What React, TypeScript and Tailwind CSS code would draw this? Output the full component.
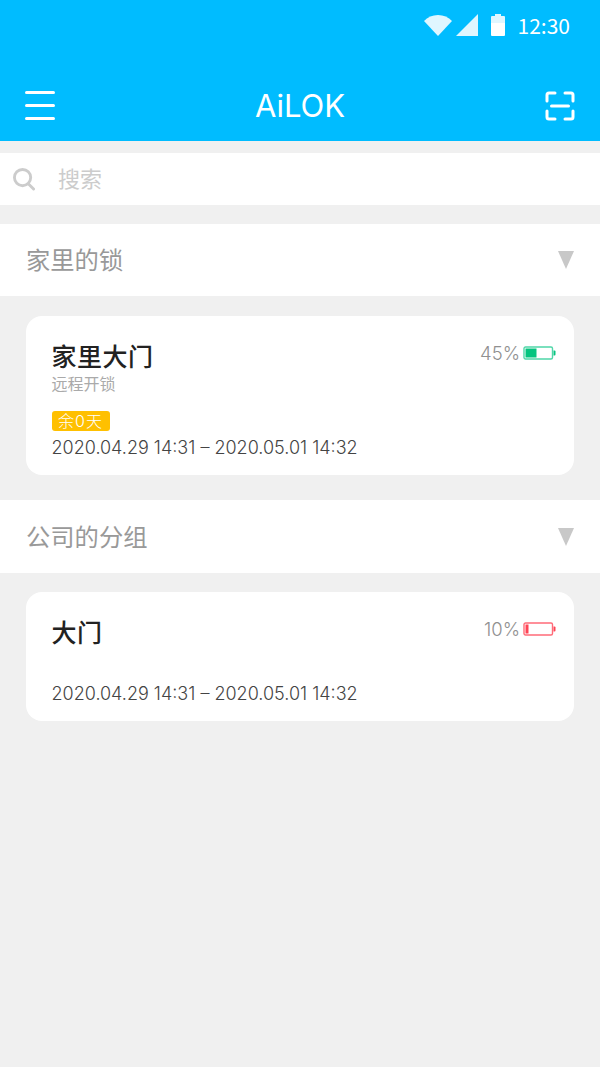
const font = "font-['Inter','Noto_Sans_CJK_SC',sans-serif]";

function Battery({ level, color, fill }: { level: number; color: string; fill: string }) {
  return (
    <svg width="33" height="14" viewBox="0 0 33 14" fill="none">
      <rect x="1" y="1" width="28.5" height="12" rx="1.5" stroke={color} strokeWidth="1.4" />
      <path d="M30.500 4.500h1a1 1 0 0 1 1 1v3a1 1 0 0 1-1 1h-1z" fill={fill} />
      <rect x="2.500" y="2.500" width={level} height="9" fill={fill} />
    </svg>
  );
}

function SectionHeader({ title, className }: { title: string; className: string }) {
  return (
    <div className={`flex items-center justify-between bg-white pl-[26px] pr-[26px] ${className}`}>
      <span className="pt-[1px] text-[24.300px] text-[#999999]">{title}</span>
      <svg width="16" height="18" viewBox="0 0 16 18">
        <path d="M0 0h16L8 18z" fill="#c8c8c8" />
      </svg>
    </div>
  );
}

function Range() {
  return (
    <p className="text-[18px] leading-[24px] font-light text-[#444444]">2020.04.29 14:31 – 2020.05.01 14:32</p>
  );
}

export default function App() {
  return (
    <main className={`flex h-[1067px] w-[600px] flex-col bg-[#f0f0f0] ${font}`}>
      <header className="h-[141px] bg-[#00bcff] text-white">
        <div className="flex h-[50px] items-center justify-end pr-[30px]">
          <svg width="28" height="22" viewBox="0 0 28 22" className="mr-[4px]">
            <path d="M0 7C3.500 3 8.500 1 14 1s10.500 2 14 6L14 22z" fill="#e0f6ff" />
          </svg>
          <svg width="22" height="22" viewBox="0 0 22 22" className="mr-[13px]">
            <path d="M22 0v22H0z" fill="#e0f6ff" />
          </svg>
          <svg width="14" height="22" viewBox="0 0 14 22" className="mr-[13px]">
            <path d="M4 0h6v2h3a1 1 0 0 1 1 1v6H0V3a1 1 0 0 1 1-1h3z" fill="#e0f6ff" />
            <path d="M0 9h14v12a1 1 0 0 1-1 1H1a1 1 0 0 1-1-1z" fill="#ffffff" />
          </svg>
          <span className="font-['Noto_Sans_CJK_SC',sans-serif] text-[21px] leading-[24px]">12:30</span>
        </div>
        <div className="flex h-[91px] items-center justify-between px-[25px] pt-[20px]">
          <div className="flex w-[30px] flex-col gap-[10px]">
            <span className="h-[3px] rounded-full bg-white" />
            <span className="h-[3px] rounded-full bg-white" />
            <span className="h-[3px] rounded-full bg-white" />
          </div>
          <h1 className="pt-[2px] text-[31px] font-normal">AiLOK</h1>
          <svg width="30" height="30" viewBox="0 0 30 30" fill="none" stroke="#fff" strokeWidth="3" strokeLinecap="round" strokeLinejoin="round">
            <path d="M10 2H4a2 2 0 0 0-2 2v6M20 2h6a2 2 0 0 1 2 2v6M10 28H4a2 2 0 0 1-2-2v-6M20 28h6a2 2 0 0 0 2-2v-6M6.500 15h17" />
          </svg>
        </div>
      </header>

      <div className="mt-[12px] flex h-[52px] items-center bg-white pl-[13px]">
        <svg width="22" height="23" viewBox="0 0 23 24" fill="none" stroke="#cccccc" strokeWidth="3" strokeLinecap="round">
          <circle cx="10" cy="10" r="8.500" />
          <path d="M16.500 17l5 5" />
        </svg>
        <span className="ml-[23px] text-[22px] text-[#cccccc]">搜索</span>
      </div>

      <SectionHeader title="家里的锁" className="mt-[19px] h-[72px]" />

      <section className="mx-[26px] mt-[20px] h-[159px] rounded-[16px] bg-white pl-[25.500px] pr-[18px] pt-[24px]">
        <div className="flex items-start justify-between">
          <h2 className="text-[25px] leading-[34px] font-medium tracking-[0.5px] text-[#222222]">家里大门</h2>
          <div className="flex items-center gap-[3px] pt-[1px]">
            <span className="text-[18.500px] leading-[24px] font-light text-[#909090]">45%</span>
            <Battery level={11} color="#4fd6a8" fill="#06c47f" />
          </div>
        </div>
        <p className="text-[16px] leading-[20px] text-[#aaaaaa]">远程开锁</p>
        <span className="mt-[17px] flex h-[20px] w-[58px] items-center justify-center rounded-[3px] bg-[#ffc000] text-[16px] font-light tracking-[1px] text-white">余0天</span>
        <div className="mt-[5px]">
          <Range />
        </div>
      </section>

      <SectionHeader title="公司的分组" className="mt-[25px] h-[73px]" />

      <section className="mx-[26px] mt-[19px] h-[129px] rounded-[16px] bg-white pl-[25.500px] pr-[18px] pt-[24px]">
        <div className="flex items-start justify-between">
          <h2 className="text-[25px] leading-[34px] font-medium tracking-[0.5px] text-[#222222]">大门</h2>
          <div className="flex items-center gap-[3px] pt-[1px]">
            <span className="text-[18.500px] leading-[24px] font-light text-[#909090]">10%</span>
            <Battery level={3} color="#ff6b78" fill="#ff4455" />
          </div>
        </div>
        <div className="mt-[32px]">
          <Range />
        </div>
      </section>
    </main>
  );
}
